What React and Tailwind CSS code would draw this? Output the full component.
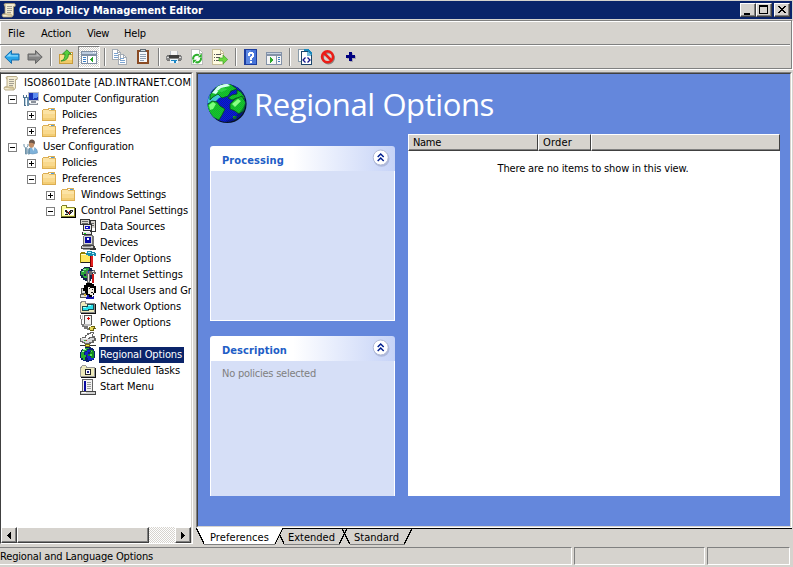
import React, { useLayoutEffect, useRef, useState } from "react";

// Text run whose tracking is computed so that it spans a fixed advance width.
function T({ w, className = "", children }) {
  const ref = useRef(null);
  const [spacing, setSpacing] = useState(0);
  useLayoutEffect(() => {
    const natural = ref.current.getBoundingClientRect().width;
    setSpacing((w - natural) / String(children).length);
  }, [w, children]);
  return (
    <span ref={ref} className={"inline-block whitespace-pre " + className} style={{ letterSpacing: spacing + "px" }}>
      {children}
    </span>
  );
}

function Ico({ children, className = "" }) {
  return (
    <svg viewBox="0 0 16 16" width="16" height="16" shapeRendering="crispEdges" className={"block shrink-0 " + className}>
      {children}
    </svg>
  );
}

const Scroll = () => (
  <Ico>
    <g shapeRendering="auto">
      <path d="M4 1.500h9.500q1.500 1 .5 3h-1.500v8.500l-1.500 2H2q-1.500-1.500-.5-3h2.500z" fill="#f3ecd2" stroke="#a89a72" strokeWidth=".8" />
      <path d="M4 1.500q-2 1 0 3M2 12h8q1.500 1.500 0 3" fill="#d9cba1" stroke="#b3a173" strokeWidth=".7" />
      <path d="M6 4.500h5M6 6.500h5M6 8.500h5M6 10.500h4" stroke="#9a968a" strokeWidth=".9" />
    </g>
  </Ico>
);

const Folder = () => (
  <Ico>
    <path d="M2 2h5V1h7v2h1v11H1V3h1z" fill="#dcae52" />
    <path d="M2 3h12v10H2z" fill="#fce3a4" />
    <path d="M2 7h12v6H2z" fill="#f9d98d" />
    <path d="M2 11h12v2H2z" fill="#f3cd74" />
    <path d="M8 2h5v1H8z" fill="#fff" />
    <path d="M10 2h3v1h-3z" fill="#4c9be0" />
    <path d="M8 3h6v1H8z" fill="#e5bd66" />
  </Ico>
);

const Computer = () => (
  <Ico>
    <path d="M5 1h11v9H5z" fill="#b9bec6" />
    <path d="M6 2h9v7H6z" fill="#1733b5" />
    <path d="M10 2h5v4l-5 2z" fill="#5b8cf0" />
    <path d="M8 10h5v2H8zM6 12h9v2H6z" fill="#8a919b" />
    <path d="M7 12h7v1H7z" fill="#dfe3e8" />
    <path d="M0 4h1v2h2V4h1v3H3v8H1V7H0z" fill="#4d7390" />
    <path d="M4 6h2v9H4z" fill="#6c91aa" />
    <path d="M2 7h1v7H2z" fill="#b9d3e3" />
  </Ico>
);

const User = () => (
  <Ico>
    <g shapeRendering="auto">
      <path d="M5 14q0-6 5-6 4.500 1 4.500 6-5 2-9.500 0z" fill="#7fb2da" stroke="#5c8ab0" strokeWidth=".5" />
      <path d="M8.500 8l2 4 1-4z" fill="#eef4f8" />
      <ellipse cx="8.500" cy="5" rx="2.700" ry="3.800" fill="#c28e67" />
      <path d="M6 4q0-4 3.500-3.500 3.500 1 2 5-1-2.500-5.500-1.500z" fill="#6b5548" />
      <path d="M1 5v2.500l1.500 1V15h1.200V8.500L5 7V5M5 9.500V15h1.500V9" fill="none" stroke="#6f93a9" strokeWidth="1" />
    </g>
  </Ico>
);

const ControlPanel = () => (
  <Ico>
    <path d="M2 2h5v2h8v1h1v10H1V3h1z" fill="#000" />
    <path d="M2 2h5v2h8v10H1V3h1z" fill="#80802a" />
    <path d="M2 3h4v2h8v8H2z" fill="#ffff9c" />
    <path d="M4 6h10v6H4z" fill="#fff" />
    <path d="M5 7h2v1h1v1h1V8h1V7h3v2h-1v1h-1v1h-1v1H9v-1H8v1H5v-1h1V9H5z" fill="#222" />
    <path d="M9 9h1v2H9zM7 8h1v1H7z" fill="#d22" />
    <path d="M6 10h2v1H6zM11 8h1v1h-1z" fill="#bbb" />
  </Ico>
);

const DataSources = () => (
  <Ico>
    <path d="M0 0h10v6H0zM10 1h6v12h-6z" fill="#333" />
    <path d="M1 1h8v4H1zM11 2h4v10h-4z" fill="#d6d3ce" />
    <path d="M2 2h6v1H2zM2 4h6v1H2zM11 4h3v1h-3zM11 6h3v1h-3z" fill="#666" />
    <path d="M3 5h9v7H3zM2 13h10v3H2z" fill="#333" />
    <path d="M4 6h7v5H4zM3 13h8v2H3z" fill="#e5e5e5" />
    <path d="M5 7h5v3H5z" fill="#0a0ac0" />
    <path d="M6 8h2v1H6z" fill="#fff" />
    <path d="M4 14h2v1H4z" fill="#1c1" />
    <path d="M12 9h3v3h-3z" fill="#fff" />
  </Ico>
);

const Devices = () => (
  <Ico>
    <path d="M4 0h9v1h1v9H3V1h1z" fill="#777" />
    <path d="M4 1h8v8H4z" fill="#d8d8d8" />
    <path d="M5 2h6v6H5z" fill="#0808a8" />
    <path d="M7 3h2v2H7z" fill="#fff" />
    <path d="M2 10h12v1h1v3H1v-3h1z" fill="#444" />
    <path d="M2 11h11v2H2z" fill="#d0d0d0" />
    <path d="M3 11h8v1H3z" fill="#888" />
    <path d="M9 14h7v1H9zM13 13h3v2h-3z" fill="#333" />
    <path d="M3 14h7v1H3z" fill="#999" />
  </Ico>
);

const FolderOptions = () => (
  <Ico>
    <path d="M0 2h1V1h4v1h7v10H0z" fill="#908000" />
    <path d="M1 3h10v8H1z" fill="#ffe85c" />
    <path d="M1 3h5v1H1z" fill="#fff9c8" />
    <path d="M6 2h1V0h5v1h3v1h1v3h-2V4h-1v1H8V4H6z" fill="#168cae" />
    <path d="M8 1h3v1H8zM12 2h2v1h-2z" fill="#b8f4ff" />
    <path d="M10 5h2v4h1v7h-3z" fill="#7e0000" />
    <path d="M11 5h2v10h-2z" fill="#e52020" />
    <path d="M1 11h9v1H1z" fill="#222" />
  </Ico>
);

const InternetSettings = () => (
  <Ico>
    <path d="M4 0h6v1h2v2h1v9h-2v2H5v-1H3v-2H1V9H0V4h1V2h2V1h1z" fill="#10244a" />
    <path d="M4 1h5v2H8v2H6v2H4v3H3V8H1V4h2V2h1z" fill="#28a438" />
    <path d="M3 2h3v1H3zM2 4h2v1H2z" fill="#9de8af" />
    <path d="M7 4h3v5H7z" fill="#194bc8" />
    <path d="M6 4h2v2h1V4h4V3h2v2h1v2h-2V6h-2v2h-2v8H7V9H6z" fill="#696969" />
    <path d="M8 7h1v8H8zM12 4h2v1h-2z" fill="#e2e2e2" />
    <path d="M12 7h2v9h-2z" fill="#c81616" />
    <path d="M4 9h3v2H4z" fill="#2bb23a" />
  </Ico>
);

const LocalUsers = () => (
  <Ico>
    <path d="M1 5h5v4h4v6H0v-4h1z" fill="#555" />
    <path d="M2 6h4v4H2zM1 12h8v2H1z" fill="#ddd" />
    <path d="M3 6h2v2H3z" fill="#0a0ab0" />
    <path d="M6 0h6v1h2v2h2v7h-2v2h-2v2H9v-2H6v-2H5V8H3V5h1V2h2z" fill="#000" />
    <path d="M8 4h2v1h4v5h-1v2h-3v-1H8z" fill="#f4eee2" />
    <path d="M9 5h1v1H9zM12 6h1v1h-1zM11 9h2v1h-2z" fill="#222" />
    <path d="M7 12h2v2h4v-1h1v3H6v-2h1z" fill="#1313ac" />
    <path d="M4 11h2v2H4z" fill="#d9b43b" />
  </Ico>
);

const NetworkOptions = () => (
  <Ico>
    <path d="M0 3h1V2h5v2h9v10H0z" fill="#888" />
    <path d="M15 5h1v10H1v-1h14z" fill="#111" />
    <path d="M1 4h1V3h3v2h9v8H1z" fill="#eeeabc" />
    <path d="M2 7h7v5H2zM7 5h7v6H7z" fill="#184b50" />
    <path d="M3 8h5v3H3zM8 6h5v4H8z" fill="#28e1ec" />
    <path d="M3 8h3v1H3zM8 6h3v1H8z" fill="#a9ffff" />
  </Ico>
);

const PowerOptions = () => (
  <Ico>
    <path d="M0 0h1v4h1v5h2v2h4v2h3v2H7v-1H4v-2H2v-2H1V4H0z" fill="#777" />
    <path d="M2 0h1v5H2z" fill="#ccc" />
    <path d="M4 0h8v10H4z" fill="#555" />
    <path d="M5 1h6v8H5z" fill="#f4f4f4" />
    <path d="M8 2h1v1h1v1H9v1H8V4H7V3h1z" fill="#d20000" />
    <path d="M4 9h7v2H4z" fill="#bbb" />
    <path d="M9 12h2v-1h4v2h1v1h-2v2h-4v-1H9z" fill="#68600b" />
    <path d="M10 12h4v1h-1v2h-3z" fill="#e5d65a" />
  </Ico>
);

const Printers = () => (
  <Ico>
    <path d="M5 4h2V2h3V1h4v2h-1v2h2v2h1v3h-2v2h-3v1H4v-1H2v-1H0V7h2V6h3z" fill="#666" />
    <path d="M7 4h2V3h2V2h2v1h-1v3H9v1H6z" fill="#fff" />
    <path d="M1 7h3v1h6V7h4v2h-2v2H9v1H5v-1H3v-1H1z" fill="#d7d7d7" />
    <path d="M3 7h5v1H3z" fill="#f5f5f5" />
    <path d="M4 9h2v1H4z" fill="#38bb38" />
    <path d="M6 9h1v1H6z" fill="#c22" />
    <path d="M0 14h16v1H0z" fill="#333" />
    <path d="M5 13h5v3H5z" fill="#77700e" />
    <path d="M6 14h3v1H6z" fill="#f2e655" />
  </Ico>
);

const SmallGlobe = () => (
  <Ico>
    <path d="M5 0h6v1h2v1h1v2h1v7h-1v2h-2v1H9v1H6v-1H3v-1H1v-2H0V5h1V3h1V2h3z" fill="#082070" />
    <path d="M7 3h3v2H8v2h2v3l4 1-2 2H8v-2H7V8H5V5h2z" fill="#1228c8" />
    <path d="M5 1h4v1H7v2H5v1H4v2H1V5h1V3h2V2h1z" fill="#25a83c" />
    <path d="M3 2h3v1H3zM2 4h2v1H2z" fill="#b0f5b5" />
    <path d="M1 7h3v1h2v2H5v3H3v-2H1z" fill="#26b52b" />
    <path d="M10 3h3v1h1v7h-3V9H8V7h2V5h1V4h-1z" fill="#158a20" />
    <path d="M10 7h2v2h-2zM11 4h1v1h-1z" fill="#55e552" />
  </Ico>
);

const Tasks = () => (
  <Ico>
    <path d="M0 4h1V3h1V2h4v1h1v1h8v10H0z" fill="#999" />
    <path d="M15 5h1v10H1v-1h14z" fill="#111" />
    <path d="M1 5h1V3h4v2h8v8H1z" fill="#eeeabc" />
    <path d="M5 6h6v6H5z" fill="#222" />
    <path d="M6 7h4v4H6z" fill="#fff" />
    <path d="M7 8h2v2H7z" fill="#252586" />
  </Ico>
);

const StartMenu = () => (
  <Ico>
    <path d="M2 0h11v12H2z" fill="#666" />
    <path d="M3 1h9v11H3z" fill="#f2f2f2" />
    <path d="M4 2h2v10H4z" fill="#0909a0" />
    <path d="M7 3h4v1H7zM7 5h4v1H7zM7 7h4v1H7zM7 9h4v1H7z" fill="#999" />
    <path d="M0 12h16v4H0z" fill="#444" />
    <path d="M1 13h14v2H1z" fill="#d0d0d0" />
    <path d="M2 13h4v1H2z" fill="#fff" />
  </Ico>
);

const rows = [
  [0, "", Scroll, "ISO8601Date [AD.INTRANET.COM]", 171],
  [1, "-", Computer, "Computer Configuration", 116],
  [2, "+", Folder, "Policies", 35],
  [2, "+", Folder, "Preferences", 59],
  [1, "-", User, "User Configuration", 91],
  [2, "+", Folder, "Policies", 35],
  [2, "-", Folder, "Preferences", 59],
  [3, "+", Folder, "Windows Settings", 85],
  [3, "-", ControlPanel, "Control Panel Settings", 107],
  [4, "", DataSources, "Data Sources", 65],
  [4, "", Devices, "Devices", 38],
  [4, "", FolderOptions, "Folder Options", 71],
  [4, "", InternetSettings, "Internet Settings", 83],
  [4, "", LocalUsers, "Local Users and Groups", 115],
  [4, "", NetworkOptions, "Network Options", 81],
  [4, "", PowerOptions, "Power Options", 71],
  [4, "", Printers, "Printers", 38],
  [4, "", SmallGlobe, "Regional Options", 82],
  [4, "", Tasks, "Scheduled Tasks", 80],
  [4, "", StartMenu, "Start Menu", 54],
];
const indent = ["w-0", "w-[4px]", "w-[23px]", "w-[42px]", "w-[76px]"];

function Expander({ sign }) {
  return (
    <svg width="9" height="9" viewBox="0 0 9 9" shapeRendering="crispEdges" className="mx-[3px] shrink-0">
      <path d="M.5.5h8v8h-8z" fill="#fff" stroke="#808080" />
      <path d="M2 4h5v1H2z" />
      {sign === "+" && <path d="M4 2h1v5H4z" />}
    </svg>
  );
}

function Tree() {
  return (
    <div className="flex-1 overflow-hidden">
      {rows.map(([level, sign, Icon, label, w], i) => (
        <div key={i} className="flex h-4 items-center">
          <div className={"shrink-0 " + indent[level]} />
          {sign && <Expander sign={sign} />}
          <div className={level === 0 ? "ml-[2px]" : level === 2 || level === 3 ? "ml-[2px]" : "ml-[3px]"}>
            <Icon />
          </div>
          <div
            className={
              "flex h-4 shrink-0 items-center pr-[2px] pl-px " +
              (level === 4 || level === 1 ? "ml-[3px] " : "ml-[4px] ") +
              (label === "Regional Options" ? "bg-[#0a246a] text-white" : "")
            }
          >
            <T w={w}>{label}</T>
          </div>
        </div>
      ))}
    </div>
  );
}

const raised = "border border-t-white border-l-white border-r-[#404040] border-b-[#404040] bg-[#d6d3ce] shadow-[inset_-1px_-1px_0_#808080]";
const dither = "bg-[repeating-conic-gradient(#fff_0_25%,#d6d3ce_0_50%)] bg-[length:2px_2px]";

function HScroll() {
  return (
    <div className="flex h-4 shrink-0">
      <div className={"flex w-4 items-center justify-center " + raised}>
        <svg width="4" height="7" viewBox="0 0 4 7" shapeRendering="crispEdges"><path d="M3 0h1v7H3zM2 1h1v5H2zM1 2h1v3H1zM0 3h1v1H0z" /></svg>
      </div>
      <div className={"w-[132px] " + raised} />
      <div className={"flex-1 " + dither} />
      <div className={"flex w-4 items-center justify-center " + raised}>
        <svg width="4" height="7" viewBox="0 0 4 7" shapeRendering="crispEdges"><path d="M0 0h1v7H0zM1 1h1v5H1zM2 2h1v3H2zM3 3h1v1H3z" /></svg>
      </div>
    </div>
  );
}

function Arrow({ flip, light, fill, stroke }) {
  return (
    <Ico className={flip ? "-scale-x-100" : ""}>
      <g shapeRendering="auto">
        <path d="M.8 8L7.500 1.500v3.500H15v6H7.500v3.500z" fill={fill} stroke={stroke} strokeLinejoin="round" />
        <path d="M2.500 7.600L6.500 4v2.200H14v1.400z" fill={light} />
      </g>
    </Ico>
  );
}

const Sep = ({ className = "" }) => <div className={"h-[18px] w-[2px] shrink-0 border-l border-[#808080] bg-white " + className} />;

function Toolbar() {
  return (
    <div className="flex h-[22px] shrink-0 items-center pl-[4px]">
      <Arrow fill="#28a5e8" light="#8bdcff" stroke="#1b6fae" />
      <div className="w-[7px]" />
      <Arrow flip fill="#858585" light="#b5b5b5" stroke="#666" />
      <Sep className="ml-[7px]" />
      <Ico className="ml-[6px]">
        <path d="M1 5h6v1h2V3h6v12H1z" fill="#c89c3c" />
        <path d="M2 6h12v8H2z" fill="#fbe08a" />
        <path d="M2 11h12v3H2z" fill="#efc968" />
        <path d="M10 4h4v1h-4z" fill="#fff" />
        <path shapeRendering="auto" d="M3 12Q7 11 7 5H4.500L9 .8 13 5h-2.500q0 7-7.500 7z" fill="#56cf3c" stroke="#258a21" strokeWidth=".8" />
      </Ico>
      <div className={"ml-[4px] flex h-[22px] w-[22px] shrink-0 items-center justify-center border border-t-[#808080] border-l-[#808080] border-r-white border-b-white " + dither}>
        <Ico>
          <path d="M0 2h16v13H0z" fill="#8090a5" />
          <path d="M1 3h14v2H1z" fill="#bdcce0" />
          <path d="M12 3h1v1h-1zM14 3h1v1h-1z" fill="#fff" />
          <path d="M1 7h5v7H1zM7 7h8v7H7z" fill="#fff" />
          <path d="M2 8h3v1H2zM2 10h3v1H2zM2 12h3v1H2z" fill="#3c7fc9" />
          <path d="M12 8v5h-1v-1h-1v-1H9v-1h1V9h1V8z" fill="#25a32a" />
        </Ico>
      </div>
      <Sep className="ml-[4px]" />
      <Ico className="ml-[6px]">
        <path d="M.5.500h5l3 3v7h-8zM6.500 5.500h5l3 3v7h-8z" fill="#fff" stroke="#a4abb4" />
        <path d="M2 4h4v1H2zM2 6h4v1H2zM2 8h4v1H2zM8 9h4v1H8zM8 11h5v1H8zM8 13h5v1H8z" fill="#7ba3d1" />
        <path d="M5.500 1v2.500h3M11.500 6v2.500h3" fill="none" stroke="#a4abb4" />
      </Ico>
      <Ico className="ml-[7px]">
        <path d="M2 1h12v14H2z" fill="#8a4b24" />
        <path d="M4 3h8v10H4z" fill="#f6f8fb" />
        <path d="M5 5h6v1H5zM5 7h6v1H5zM5 9h6v1H5zM5 11h4v1H5z" fill="#91a0b3" />
        <path d="M5 0h6v3H5z" fill="#606a73" />
        <path d="M6 1h4v1H6z" fill="#d2dbe0" />
      </Ico>
      <Sep className="ml-[7px]" />
      <Ico className="ml-[6px]">
        <path d="M4 2h8v5H4z" fill="#b7bec8" />
        <path d="M5 2h6v4H5z" fill="#f5f5f5" />
        <path d="M1 6h14v6H1z" fill="#737373" />
        <path d="M0 7h16v4H0z" fill="#878787" />
        <path d="M3 6h10v3H3z" fill="#3e3e3e" />
        <path d="M1 8h2v1H1zM13 8h2v1h-2z" fill="#ddd" />
        <path d="M4 10h8v4H4z" fill="#e9f4fb" />
        <path d="M5 11h6v1H5zM8 12h2v2H8z" fill="#1a86c5" />
      </Ico>
      <Ico className="ml-[7px]">
        <path d="M2.500.500h8l3 3v12h-11z" fill="#fff" stroke="#bbb" />
        <path d="M10 1v3h3" fill="none" stroke="#bbb" />
        <g shapeRendering="auto">
          <path d="M4.200 10.500A4 4 0 0 1 10 6.200M12 8.500A4 4 0 0 1 6.500 13" fill="none" stroke="#2eaf2c" strokeWidth="2" />
          <path d="M8.800 8.300h4V4.300zM7.800 10.800h-4v4z" fill="#2eaf2c" />
        </g>
      </Ico>
      <Ico className="ml-[7px]">
        <path d="M.5.500h8l3 3v12H.500z" fill="#fffbe0" stroke="#c5bd98" />
        <path d="M8 1v3h3" fill="none" stroke="#c5bd98" />
        <path d="M2 5h1v1H2zM2 8h1v1H2zM2 11h1v1H2zM4 5h5v1H4zM4 8h4v1H4zM4 11h4v1H4z" fill="#555" />
        <path shapeRendering="auto" d="M7 9h4V6l4.700 4.500L11 15v-3H7z" fill="#6cd83f" stroke="#40a42d" strokeWidth=".7" />
      </Ico>
      <Sep className="ml-[7px]" />
      <Ico className="ml-[6px]">
        <path d="M1 0h13v16H1z" fill="#1d3d9e" />
        <path d="M3 1h10v14H3z" fill="#4774d8" />
        <path d="M3 1h5v14H3z" fill="#5c88e3" />
        <path d="M6 3h4v1h1v4h-1v1H9v2H7V8h1V7h1V5H7v2H5V4h1zM7 12h2v2H7z" fill="#fff" />
      </Ico>
      <Ico className="ml-[7px]">
        <path d="M0 3h16v13H0z" fill="#8492a8" />
        <path d="M1 4h14v1H1z" fill="#c4d0e0" />
        <path d="M1 7h9v8H1zM11 7h4v8h-4z" fill="#f6f6f6" />
        <path d="M4 8h1v1h1v1h1v2H6v1H5v1H4z" fill="#2ca92c" />
        <path d="M12 8h2v1h-2zM12 10h2v1h-2zM12 12h2v1h-2z" fill="#3977bd" />
      </Ico>
      <Sep className="ml-[7px]" />
      <Ico className="ml-[6px]">
        <path d="M1.500.500h8v12h-8z" fill="#fff" stroke="#899caa" />
        <path d="M7 0h4l4 4v2H7z" fill="#1988bd" />
        <path d="M4.500 2.500h6l4 4v9h-10z" fill="#fff" stroke="#1c456b" />
        <path d="M10 3h1l3 3v1h-4z" fill="#75bbda" />
        <g shapeRendering="auto">
          <path d="M8.500 8.500L6 11l2.500 2.500M10.500 8.500L13 11l-2.500 2.500" fill="none" stroke="#14148b" strokeWidth="1.300" />
        </g>
      </Ico>
      <Ico className="ml-[7px]">
        <g shapeRendering="auto" fill="none">
          <circle cx="8.500" cy="9" r="5.500" stroke="#8a8580" strokeWidth="2" />
          <circle cx="7.500" cy="7.800" r="5.500" stroke="#ed1c16" strokeWidth="2.500" />
          <path d="M4 4l7.500 7.500" stroke="#ed1c16" strokeWidth="2.500" />
        </g>
      </Ico>
      <Ico className="ml-[7px]">
        <path d="M7 4h3v3h3v3h-3v3H7v-3H4V7h3z" fill="#aaa8b0" />
        <path d="M6 3h3v3h3v3H9v3H6V9H3V6h3z" fill="#000080" />
      </Ico>
    </div>
  );
}

function BigGlobe() {
  return (
    <svg width="40" height="41" viewBox="0 0 40 41" className="block shrink-0">
      <defs>
        <pattern id="sea" width="2" height="2" patternUnits="userSpaceOnUse">
          <path d="M0 0h2v2H0z" fill="#0c0ce8" />
          <path d="M0 0h1v1H0zM1 1h1v1H1z" fill="#0828a0" />
        </pattern>
        <pattern id="land" width="2" height="2" patternUnits="userSpaceOnUse">
          <path d="M0 0h2v2H0z" fill="#10d820" />
          <path d="M0 0h1v1H0zM1 1h1v1H1z" fill="#18a038" />
        </pattern>
        <clipPath id="disc"><circle cx="19.500" cy="20" r="19" /></clipPath>
      </defs>
      <circle cx="20.300" cy="20.800" r="19.300" fill="#071425" />
      <g clipPath="url(#disc)">
        <path d="M0 0h40v41H0z" fill="url(#sea)" />
        <path d="M0 20L3 10 11 9l6 4-5 2-6 6z" fill="#40c8d0" />
        <path d="M3 12L11 2 22 0l8 6-6 2-3 5-6 2-4-4-5 3-3 3z" fill="url(#land)" stroke="#064c18" strokeWidth=".8" />
        <path d="M5 10L11 3 20 0l3 3-9 2-5 6z" fill="#d4fff2" />
        <path d="M10 8l5-3 6 1-6 3z" fill="#30d048" />
        <path d="M0 22l5-4 5 1 3 4 5 3-3 6-3 5-7-3-5-8z" fill="url(#land)" stroke="#064c18" strokeWidth=".8" />
        <path d="M2 22l4-3 3 2-3 5-3 1z" fill="#7cff7c" />
        <path d="M30 7l4 2 4 6-3 2-5-2-5 2-4-2 4-3 5-1z" fill="url(#land)" stroke="#064c18" strokeWidth=".8" />
        <path d="M23 21l5-5 7-3 4 7-2 8-5 3-4-3-5-2z" fill="url(#land)" stroke="#064c18" strokeWidth=".8" />
        <path d="M25 21l6-5 3 2-6 6z" fill="#8aff85" />
        <path d="M26 33l4 0-1 3-3 0z" fill="#18a030" />
        <path d="M38 12q2 10-6 18-6 6-14 8l5 3 17-8V12z" fill="#001038" opacity=".4" />
      </g>
    </svg>
  );
}

function Collapse() {
  return (
    <svg width="18" height="18" viewBox="0 0 18 18" className="block shrink-0">
      <circle cx="9.500" cy="9.800" r="8" fill="#96a1c4" opacity=".55" />
      <circle cx="8.700" cy="8.500" r="7.500" fill="#fff" stroke="#b0b9d6" />
      <path d="M5.700 8L8.700 5l3 3M5.700 12L8.700 9l3 3" fill="none" stroke="#001f8f" strokeWidth="1.500" />
    </svg>
  );
}

function Panel({ title, w, className, children }) {
  return (
    <section className={"flex flex-col " + className}>
      <header className="flex h-[25px] shrink-0 items-center justify-between rounded-t-[3px] bg-linear-to-r from-white from-45% to-[#c6d3f7] pr-[5px] pl-[12px] font-bold text-[#215dc6]">
        <T w={w} className="pt-[5px]">{title}</T>
        <div className="-mt-[2px]"><Collapse /></div>
      </header>
      <div className="flex-1 border-x border-white bg-[#d6dff7] pt-[5px] pl-[11px] text-[#808080]">{children}</div>
    </section>
  );
}

function WinButton({ children, className = "" }) {
  return (
    <div className={"h-[14px] w-4 " + raised + " " + className}>
      <svg width="14" height="12" viewBox="0 0 14 12" shapeRendering="crispEdges">{children}</svg>
    </div>
  );
}

function Header() {
  const cell = "flex items-center border-t border-r border-b border-t-white border-r-[#404040] border-b-[#404040] border-l border-l-white bg-[#d6d3ce] pt-px pl-[4px] shadow-[inset_0_-1px_0_#808080]";
  return (
    <div className="flex h-[17px]">
      <div className={"w-[130px] " + cell}><T w={28}>Name</T></div>
      <div className={"w-[53px] " + cell}><T w={29}>Order</T></div>
      <div className={"flex-1 " + cell} />
    </div>
  );
}

function Tabs() {
  return (
    <div className="relative h-[18px] shrink-0">
      <svg width="596" height="18" viewBox="0 0 596 18" shapeRendering="crispEdges" className="absolute inset-0">
        <path d="M0 .5h596" stroke="#000" />
        <path d="M1 0L8 16H78L86 0z" fill="#fff" />
        <g fill="none" stroke="#000" strokeWidth="1.300">
          <path d="M.5 0L8 16M79 16L86.500 1M84 7L88 16M143 16L151 1M146 1L154 16M208 16L216 1" />
        </g>
        <path d="M8 16.500h71M88 16.500h56M154 16.500h55" stroke="#808080" />
      </svg>
      <div className="relative flex h-[18px] items-center pt-px pl-[14px]">
        <T w={59}>Preferences</T>
        <T w={47} className="ml-[19px]">Extended</T>
        <T w={45} className="ml-[19px]">Standard</T>
      </div>
    </div>
  );
}

export default function App() {
  const status = "border border-t-[#808080] border-l-[#808080] border-r-white border-b-white";
  return (
    <div className="flex h-[567px] w-[793px] flex-col overflow-hidden bg-[#d6d3ce] font-['DejaVu_Sans_Condensed','DejaVu_Sans',sans-serif] text-[11px] leading-[14px] text-black [font-stretch:condensed]">
      <div className="mt-px mr-px flex h-[18px] shrink-0 items-center bg-[#0a246a] pr-[2px] pl-px text-white">
        <Scroll />
        <T w={184} className="ml-[2px] flex-none pt-px font-bold">Group Policy Management Editor</T>
        <div className="flex-1" />
        <WinButton><path d="M3 9h6v2H3z" /></WinButton>
        <WinButton><path d="M2 1h9v9H2zM3 3v6h7V3z" fillRule="evenodd" /></WinButton>
        <WinButton className="ml-[2px]">
          <path d="M3 2h2v1h1v1h2V3h1V2h2v1h-1v1H9v1H8v1h1v1h1v1h1v1H9V8H8V7H6v1H5v1H3V8h1V7h1V6h1V5H5V4H4V3H3z" />
        </WinButton>
      </div>
      <div className="mt-px mr-px flex shrink-0 flex-col border border-l-0 border-[#808080] shadow-[inset_1px_1px_0_#fff,1px_1px_0_#fff]">
        <nav className="flex h-[23px] items-center pt-[2px] pl-[8px]">
          <T w={17}>File</T>
          <T w={30} className="ml-[16px]">Action</T>
          <T w={22} className="ml-[16px]">View</T>
          <T w={22} className="ml-[15px]">Help</T>
        </nav>
        <div className="mr-px h-[2px] border-t border-[#808080] bg-white" />
        <Toolbar />
      </div>
      <main className="mt-[3px] flex h-[474px] shrink-0">
        <div className="flex h-[472px] w-[193px] flex-col border-t border-r border-b border-l border-t-[#808080] border-r-white border-b-white border-l-[#404040]">
          <div className="flex flex-1 flex-col border-t border-r border-t-[#404040] border-r-[#d6d3ce] bg-white pt-px">
            <Tree />
            <HScroll />
          </div>
        </div>
        <div className="ml-[3px] flex w-[596px] flex-col">
          <div className="flex h-[456px] shrink-0 border border-t-[#808080] border-l-[#808080] border-r-white border-b-white">
            <div className="flex flex-1 flex-col border border-t-[#404040] border-l-[#404040] border-r-[#d6d3ce] border-b-[#d6d3ce] bg-[#6487dc]">
              <div className="flex h-[60px] shrink-0 items-start pt-[9px] pl-[9px]">
                <BigGlobe />
                <T w={240} className="mt-[1px] ml-[7px] font-['Open_Sans','Noto_Sans',sans-serif] text-[31px] leading-[40px] font-normal text-white [font-stretch:normal]">Regional Options</T>
              </div>
              <div className="flex h-[362px] pr-[10px] pl-[12px]">
                <div className="mt-[12px] flex w-[185px] flex-col gap-[15px]">
                  <Panel title="Processing" w={62} className="h-[175px] border-b border-white" />
                  <Panel title="Description" w={65} className="h-[160px]"><T w={94} className="mt-px">No policies selected</T></Panel>
                </div>
                <div className="ml-[13px] flex-1 bg-white">
                  <Header />
                  <div className="pt-[11px] pr-[2px] text-center"><T w={191}>There are no items to show in this view.</T></div>
                </div>
              </div>
            </div>
          </div>
          <Tabs />
        </div>
      </main>
      <footer className="mt-px flex h-[18px] shrink-0">
        <div className={"flex w-[572px] items-center border-l-0 pt-px " + status}><T w={153}>Regional and Language Options</T></div>
        <div className={"ml-[2px] w-[131px] " + status} />
        <div className={"ml-[2px] w-[83px] " + status} />
      </footer>
    </div>
  );
}
